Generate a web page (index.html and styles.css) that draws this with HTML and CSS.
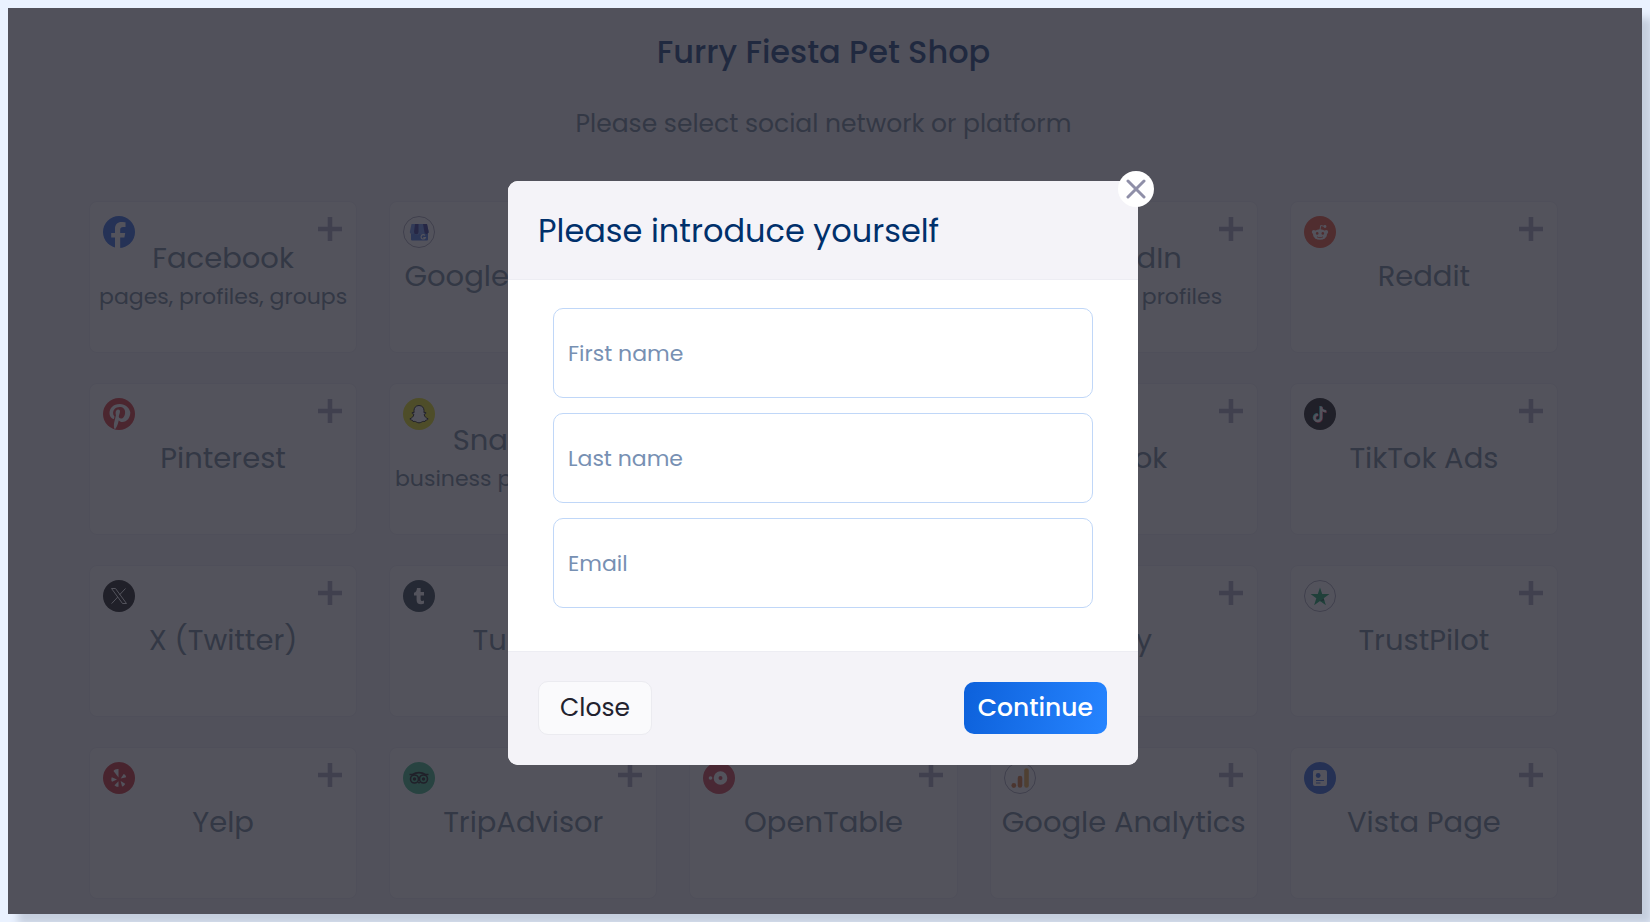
FILE: index.html
```html
<!DOCTYPE html>
<html lang="en">
<head>
    <meta charset="UTF-8">
    <meta name="viewport" content="width=device-width, initial-scale=1.0">
    <title>Furry Fiesta Pet Shop</title>
    <link rel="stylesheet" href="styles.css">
</head>
<body>
    <!-- Shared icons -->
    <svg class="sprite" aria-hidden="true">
        <symbol id="plus" viewBox="0 0 24 24">
            <path d="M12 0v24M0 12h24" stroke="currentColor" stroke-width="4.6"/>
        </symbol>
        <symbol id="facebook" viewBox="0 0 32 32">
            <circle cx="16" cy="16" r="16" fill="#1a5ae0"/>
            <path d="M12 32V21.500H8.200V17H12v-4.200C12 8.400 14.600 6 18.600 6c1.800 0 3.900.3 3.900.3V11h-2.400c-2 0-2.900 1-2.900 2.500V17h5l-.8 4.500h-4.200V32z" fill="#fff"/>
        </symbol>
        <symbol id="google-business" viewBox="0 0 32 32">
            <circle cx="16" cy="16" r="15.500" fill="#fff" stroke="#9c9cb0"/>
            <path d="M8 13h17v10.500a1 1 0 0 1-1 1H9a1 1 0 0 1-1-1z" fill="#3a6de0"/>
            <path d="M8.500 8h15.500l1.500 7a2 2 0 0 1-4 1.500 2.500 2.500 0 0 1-5 0 2.500 2.500 0 0 1-5 0A2 2 0 0 1 7 15z" fill="#5a88e8"/>
            <path d="M12 8h3.500v8a2.200 2.200 0 0 1-4.500 0zM20 8h4l1.500 7a2 2 0 0 1-4 1.500z" fill="#20248c"/>
            <path d="M22 19.400a2.200 2.200 0 1 0 .3 2.300h-2" fill="none" stroke="#fff" stroke-width="1.200"/>
        </symbol>
        <symbol id="reddit" viewBox="0 0 32 32">
            <circle cx="16" cy="16" r="16" fill="#f04020"/>
            <path d="M16 14l.7-4.500 4 .9" fill="none" stroke="#fff" stroke-width="1"/>
            <circle cx="21" cy="10.500" r="1.400" fill="#fff"/>
            <circle cx="9.800" cy="16" r="2" fill="#fff"/>
            <circle cx="22.200" cy="16" r="2" fill="#fff"/>
            <ellipse cx="16" cy="18.500" rx="7" ry="5.200" fill="#fff"/>
            <circle cx="13.200" cy="17.400" r="1.300" fill="#f04020"/>
            <circle cx="18.800" cy="17.400" r="1.300" fill="#f04020"/>
            <path d="M13 20.800c1.700 1.200 4.300 1.200 6 0" fill="none" stroke="#f04020" stroke-width=".9"/>
        </symbol>
        <symbol id="pinterest" viewBox="0 0 32 32">
            <circle cx="16" cy="16" r="16" fill="#d81f22"/>
            <path d="M16.700 6C10.400 6 6.500 10.100 6.500 15c0 2.700 1.400 5 3.600 6 .6.200.8 0 .9-.5l.4-1.400c.1-.5 0-.6-.3-1-.7-.8-1-1.800-1-3 0-3.300 2.500-6.200 6.500-6.200 3.500 0 5.500 2.100 5.500 5 0 3.800-1.700 6.700-4.200 6.700-1.400 0-2.400-1.100-2.100-2.500.4-1.700 1.200-3.500 1.200-4.700 0-1.100-.6-2-1.800-2-1.400 0-2.600 1.500-2.600 3.500 0 1.300.4 2.100.4 2.100l-1.800 7.600c-.5 2.200-.3 4.700-.1 6l1.200.4c.8-1.200 2-3.200 2.500-5l1-3.800c.5 1 2 1.800 3.500 1.800 4.700 0 8-4.300 8-9.700C26.300 9.800 22.500 6 16.700 6z" fill="#fff"/>
        </symbol>
        <symbol id="snapchat" viewBox="0 0 32 32">
            <circle cx="16" cy="16" r="16" fill="#e4e000"/>
            <path d="M16 7.500c-3.500 0-5 2.600-5 5v2.300l-1.800-.3c-.3 1 .4 1.500 1.700 2-.5 2.200-2 3.500-4 4.300.2 1 1.200 1.200 2.500 1.500l.6 1.200c1.200-.3 2.500-.1 3.500.6 1.600 1 3.400 1 5 0 1-.7 2.300-.9 3.500-.6l.6-1.200c1.300-.3 2.300-.5 2.500-1.500-2-.8-3.500-2.100-4-4.300 1.300-.5 2-1 1.700-2l-1.800.3v-2.300c0-2.400-1.500-5-5-5z" fill="#fff" stroke="#000" stroke-width="1"/>
        </symbol>
        <symbol id="tiktok" viewBox="0 0 32 32">
            <circle cx="16" cy="16" r="16" fill="#000"/>
            <g fill="none" stroke-width="2.200">
                <path d="M16.400 8v11.500a3.300 3.300 0 1 1-3.200-3.400M16.400 8.500c.2 2.800 2 4.200 5 4.400" stroke="#25f4ee"/>
                <path d="M17.800 9v11.500a3.300 3.300 0 1 1-3.200-3.400M17.800 9.500c.2 2.800 2 4.200 5 4.400" stroke="#fe2c55"/>
                <path d="M17.200 8.500V20a3.300 3.300 0 1 1-3.200-3.400M17.200 9c.2 2.800 2 4.200 5 4.400" stroke="#fff"/>
            </g>
        </symbol>
        <symbol id="x" viewBox="0 0 32 32">
            <circle cx="16" cy="16" r="16" fill="#000"/>
            <path d="M8.500 8.500h4l11 15h-4zM22.500 8.500l-6.200 6.600M14.800 17l-6.200 6.600" fill="none" stroke="#fff" stroke-width="1"/>
        </symbol>
        <symbol id="tumblr" viewBox="0 0 32 32">
            <circle cx="16" cy="16" r="16" fill="#1c3038"/>
            <path d="M14 8h3.600v4H21v3.400h-3.400V19c0 1.600.7 2 1.700 2 .6 0 1.200-.2 1.700-.4v3c-.8.5-1.800.6-3 .6-3 0-4.400-1.700-4.400-4.300v-4.500H11v-2.600c2-.6 2.800-2.200 3-4.800z" fill="#fff"/>
        </symbol>
        <symbol id="trustpilot" viewBox="0 0 32 32">
            <circle cx="16" cy="16" r="15.500" fill="#fff" stroke="#9c9cb0"/>
            <path d="M16 7.500l2.200 6.500H25.500l-5.800 4.300 2.200 7-5.900-4.300-5.900 4.300 2.200-7L6.500 14h7.300z" fill="#00a058"/>
            <path d="M19.700 18.600l.6 2-4.300.7z" fill="#00513a"/>
        </symbol>
        <symbol id="yelp" viewBox="0 0 32 32">
            <circle cx="16" cy="16" r="16" fill="#c8181c"/>
            <g fill="#fff">
                <path d="M15.500 15.500l-5-6.500c.4-1.300 3-2.200 5-2z"/>
                <path d="M14 17.500l-5 2.200c-1-1-.8-3.500-.2-4.500z"/>
                <path d="M15.500 19.300v5.400c-1.200.5-3.400-.4-4-1.400z"/>
                <path d="M17.600 19l4.500 2.800c-.2 1.300-1.800 2.700-3 2.700z"/>
                <path d="M17.700 16.500l3-4.400c1.300.2 2.400 2 2.400 3.200z"/>
            </g>
        </symbol>
        <symbol id="tripadvisor" viewBox="0 0 32 32">
            <circle cx="16" cy="16" r="16" fill="#28b078"/>
            <g fill="none" stroke="#000" stroke-width="1.600">
                <circle cx="11.500" cy="17" r="4"/>
                <circle cx="20.500" cy="17" r="4"/>
                <path d="M6.500 12.500h3.200c3.500-2.500 9-2.500 12.600 0h3.200"/>
            </g>
            <circle cx="11.500" cy="17" r="1.700"/>
            <circle cx="20.500" cy="17" r="1.700"/>
            <path d="M14.500 20h3L16 22z"/>
        </symbol>
        <symbol id="opentable" viewBox="0 0 32 32">
            <circle cx="16" cy="16" r="16" fill="#cc2c3a"/>
            <circle cx="7.500" cy="16" r="1.800" fill="#fff"/>
            <circle cx="17.500" cy="16" r="4.400" fill="none" stroke="#fff" stroke-width="4.800"/>
        </symbol>
        <symbol id="analytics" viewBox="0 0 32 32">
            <circle cx="16" cy="16" r="15.500" fill="#fff" stroke="#9c9cb0"/>
            <path d="M22.500 8.500v15" stroke="#e8a030" stroke-width="4.600" stroke-linecap="round"/>
            <path d="M16 16v7.500" stroke="#d86c20" stroke-width="4.600" stroke-linecap="round"/>
            <circle cx="9.800" cy="23.500" r="2.400" fill="#d86c20"/>
        </symbol>
        <symbol id="vista" viewBox="0 0 32 32">
            <circle cx="16" cy="16" r="16" fill="#1a56d8"/>
            <rect x="9" y="8" width="14" height="16" rx="2" fill="#fff"/>
            <circle cx="14.200" cy="13.500" r="2.400" fill="#1a56d8"/>
            <path d="M12 18.500h8M12 21h4.500" stroke="#1a56d8" stroke-width="1.200"/>
        </symbol>
        <symbol id="instagram" viewBox="0 0 32 32">
            <circle cx="16" cy="16" r="16" fill="#d62976"/>
            <g fill="none" stroke="#fff" stroke-width="2">
                <rect x="8" y="8" width="16" height="16" rx="5"/>
                <circle cx="16" cy="16" r="4"/>
            </g>
        </symbol>
        <symbol id="youtube" viewBox="0 0 32 32">
            <circle cx="16" cy="16" r="16" fill="#f00"/>
            <path d="M12 9.500v13l10.500-6.500z" fill="#fff"/>
        </symbol>
        <symbol id="store" viewBox="0 0 32 32">
            <circle cx="16" cy="16" r="16" fill="#f1641e"/>
            <path d="M9 13h14l-1 11H10zM13 13a3 3 0 0 1 6 0" fill="none" stroke="#fff" stroke-width="2"/>
        </symbol>
        <symbol id="linkedin" viewBox="0 0 32 32">
            <circle cx="16" cy="16" r="16" fill="#0a66c2"/>
            <path d="M10.500 13.500V23M15.500 23v-9.500M15.500 18c0-5 6.500-5 6.500 0v5" fill="none" stroke="#fff" stroke-width="3"/>
            <circle cx="10.500" cy="10" r="1.800" fill="#fff"/>
        </symbol>
    </svg>

    <div class="shell">
        <main class="page">
            <h1 class="title">Furry Fiesta Pet Shop</h1>
            <p class="subtitle">Please select social network or platform</p>

            <div class="networks">
                <button class="card" type="button">
                    <svg class="logo"><use href="#facebook"/></svg>
                    <svg class="plus"><use href="#plus"/></svg>
                    <span class="name">Facebook</span>
                    <span class="note">pages, profiles, groups</span>
                </button>
                <button class="card" type="button">
                    <svg class="logo"><use href="#google-business"/></svg>
                    <svg class="plus"><use href="#plus"/></svg>
                    <span class="name">Google Business</span>
                </button>
                <button class="card" type="button">
                    <svg class="logo"><use href="#instagram"/></svg>
                    <svg class="plus"><use href="#plus"/></svg>
                    <span class="name">Instagram</span>
                </button>
                <button class="card" type="button">
                    <svg class="logo"><use href="#linkedin"/></svg>
                    <svg class="plus"><use href="#plus"/></svg>
                    <span class="name">LinkedIn</span>
                    <span class="note">company, profiles</span>
                </button>
                <button class="card" type="button">
                    <svg class="logo"><use href="#reddit"/></svg>
                    <svg class="plus"><use href="#plus"/></svg>
                    <span class="name">Reddit</span>
                </button>

                <button class="card" type="button">
                    <svg class="logo"><use href="#pinterest"/></svg>
                    <svg class="plus"><use href="#plus"/></svg>
                    <span class="name">Pinterest</span>
                </button>
                <button class="card" type="button">
                    <svg class="logo"><use href="#snapchat"/></svg>
                    <svg class="plus"><use href="#plus"/></svg>
                    <span class="name">Snapchat</span>
                    <span class="note">business public profiles</span>
                </button>
                <button class="card" type="button">
                    <svg class="logo"><use href="#youtube"/></svg>
                    <svg class="plus"><use href="#plus"/></svg>
                    <span class="name">YouTube</span>
                </button>
                <button class="card" type="button">
                    <svg class="logo"><use href="#tiktok"/></svg>
                    <svg class="plus"><use href="#plus"/></svg>
                    <span class="name">TikTok</span>
                </button>
                <button class="card" type="button">
                    <svg class="logo"><use href="#tiktok"/></svg>
                    <svg class="plus"><use href="#plus"/></svg>
                    <span class="name">TikTok Ads</span>
                </button>

                <button class="card" type="button">
                    <svg class="logo"><use href="#x"/></svg>
                    <svg class="plus"><use href="#plus"/></svg>
                    <span class="name">X (Twitter)</span>
                </button>
                <button class="card" type="button">
                    <svg class="logo"><use href="#tumblr"/></svg>
                    <svg class="plus"><use href="#plus"/></svg>
                    <span class="name">Tumblr</span>
                </button>
                <button class="card" type="button">
                    <svg class="logo"><use href="#store"/></svg>
                    <svg class="plus"><use href="#plus"/></svg>
                    <span class="name">Shopify</span>
                </button>
                <button class="card" type="button">
                    <svg class="logo"><use href="#store"/></svg>
                    <svg class="plus"><use href="#plus"/></svg>
                    <span class="name">Etsy</span>
                </button>
                <button class="card" type="button">
                    <svg class="logo"><use href="#trustpilot"/></svg>
                    <svg class="plus"><use href="#plus"/></svg>
                    <span class="name">TrustPilot</span>
                </button>

                <button class="card" type="button">
                    <svg class="logo"><use href="#yelp"/></svg>
                    <svg class="plus"><use href="#plus"/></svg>
                    <span class="name">Yelp</span>
                </button>
                <button class="card" type="button">
                    <svg class="logo"><use href="#tripadvisor"/></svg>
                    <svg class="plus"><use href="#plus"/></svg>
                    <span class="name">TripAdvisor</span>
                </button>
                <button class="card" type="button">
                    <svg class="logo"><use href="#opentable"/></svg>
                    <svg class="plus"><use href="#plus"/></svg>
                    <span class="name">OpenTable</span>
                </button>
                <button class="card" type="button">
                    <svg class="logo"><use href="#analytics"/></svg>
                    <svg class="plus"><use href="#plus"/></svg>
                    <span class="name">Google Analytics</span>
                </button>
                <button class="card" type="button">
                    <svg class="logo"><use href="#vista"/></svg>
                    <svg class="plus"><use href="#plus"/></svg>
                    <span class="name">Vista Page</span>
                </button>
            </div>
        </main>

        <div class="overlay">
            <form class="modal" role="dialog" aria-labelledby="modal-title">
                <button class="dismiss" type="button" aria-label="Close dialog">
                    <svg viewBox="0 0 20 20"><path d="M2 2l16 16M18 2L2 18" stroke="currentColor" stroke-width="3" stroke-linecap="round"/></svg>
                </button>
                <div class="modal-header">
                    <h2 class="modal-title" id="modal-title">Please introduce yourself</h2>
                </div>
                <div class="modal-body">
                    <input class="field" type="text" placeholder="First name" aria-label="First name">
                    <input class="field" type="text" placeholder="Last name" aria-label="Last name">
                    <input class="field" type="email" placeholder="Email" aria-label="Email">
                </div>
                <div class="modal-footer">
                    <button class="btn btn-close" type="button">Close</button>
                    <button class="btn btn-continue" type="button">Continue</button>
                </div>
            </form>
        </div>
    </div>
</body>
</html>
```

FILE: styles.css
```css
* {
    margin: 0;
    padding: 0;
    box-sizing: border-box;
}

body {
    font-family: Poppins, Inter, sans-serif;
    background: #eaf2ff;
    padding: 8px;
}

button,
input {
    font-family: inherit;
}

.sprite {
    display: none;
}

.shell {
    position: relative;
    height: calc(100vh - 16px);
    box-shadow: 10px 10px 8px #c5cede;
}

.page {
    height: 100%;
    overflow: hidden;
    padding: 20px 84px 0 81px;
    background: #f4f3f8;
    text-align: center;
}

.title {
    font-size: 32px;
    line-height: 48px;
    font-weight: 500;
    color: #003070;
}

.subtitle {
    margin: 28px 0 57px;
    font-size: 25px;
    line-height: 40px;
    color: #60788a;
}

.networks {
    display: grid;
    grid-template-columns: repeat(5, 1fr);
    gap: 30px 32px;
}

.card {
    position: relative;
    display: flex;
    flex-direction: column;
    align-items: center;
    justify-content: center;
    height: 152px;
    padding-bottom: 2px;
    border: 1px solid #ebebf2;
    border-radius: 8px;
    background: #fff;
    color: #60788a;
    white-space: nowrap;
}

.logo {
    position: absolute;
    top: 14px;
    left: 13px;
    width: 32px;
    height: 32px;
}

.plus {
    position: absolute;
    top: 15px;
    right: 14px;
    width: 24px;
    height: 24px;
    color: #a0a0b9;
}

.name {
    font-size: 29px;
    line-height: 42px;
}

.note {
    font-size: 22px;
    line-height: 36px;
}

.overlay {
    position: absolute;
    inset: 0;
    display: flex;
    justify-content: center;
    align-items: flex-start;
    padding: 173px 4px 0 0;
    background: rgba(40, 40, 51, 0.8);
}

.modal {
    position: relative;
    width: 630px;
    max-width: 100%;
    border-radius: 10px;
    background: #fff;
}

.dismiss {
    position: absolute;
    top: -10px;
    right: -16px;
    display: flex;
    align-items: center;
    justify-content: center;
    width: 36px;
    height: 36px;
    border: none;
    border-radius: 50%;
    background: #fff;
    color: #8f8fa8;
    cursor: pointer;
}

.dismiss svg {
    width: 20px;
    height: 20px;
}

.modal-header {
    padding: 26px 30px 24px;
    border-bottom: 1px solid #ededf3;
    border-radius: 10px 10px 0 0;
    background: #f4f3f8;
}

.modal-title {
    font-size: 32px;
    line-height: 48px;
    font-weight: 400;
    color: #00306b;
}

.modal-body {
    display: flex;
    flex-direction: column;
    gap: 15px;
    padding: 28px 45px 43px;
}

.field {
    width: 100%;
    height: 90px;
    padding: 0 14px;
    border: 1px solid #c0d7f8;
    border-radius: 10px;
    font-size: 22px;
    color: #003070;
    outline: none;
}

.field::placeholder {
    color: #7790b3;
}

.modal-footer {
    display: flex;
    align-items: center;
    justify-content: space-between;
    padding: 29px 31px 30px 30px;
    border-top: 1px solid #ededf3;
    border-radius: 0 0 10px 10px;
    background: #f4f3f8;
}

.btn {
    border-radius: 10px;
    font-size: 25px;
    cursor: pointer;
}

.btn-close {
    height: 54px;
    padding: 0 21px;
    border: 1px solid #ebebf0;
    background: #fafafc;
    color: #22222e;
}

.btn-continue {
    height: 52px;
    padding: 0 14px;
    border: none;
    background: linear-gradient(100deg, #0d61db, #2684ff);
    color: #fff;
    font-weight: 500;
}
```
